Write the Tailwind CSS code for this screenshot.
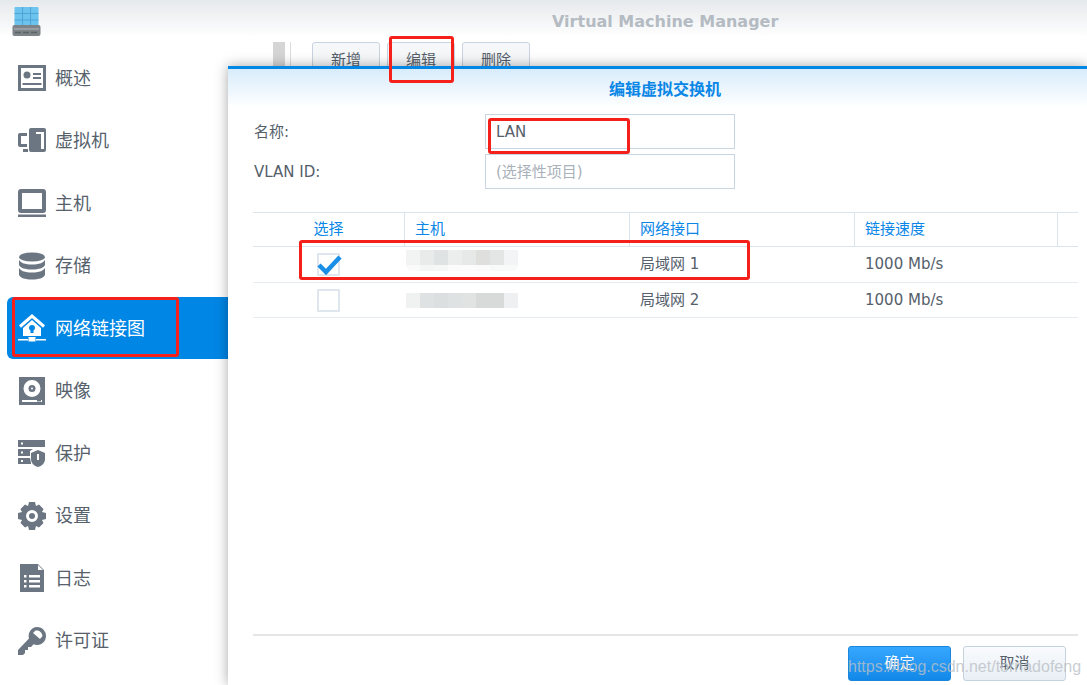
<!DOCTYPE html>
<html lang="zh">
<head>
  <meta charset="UTF-8" />
  <title>Virtual Machine Manager</title>
  <script src="https://cdn.jsdelivr.net/npm/@tailwindcss/browser@4"></script>
</head>
<body class="[font-family:'DejaVu_Sans','Noto_Sans_CJK_SC',sans-serif] text-[#55606b] bg-white">
<div class="relative w-[1087px] h-[685px] overflow-hidden bg-white">

  <!-- Header -->
  <header class="h-[47px] relative bg-gradient-to-b from-[#e6e9ec] to-white to-80%">
    <svg class="absolute left-[12px] top-[6px]" width="29" height="30" viewBox="0 0 29 30">
      <rect x="2.500" y="1" width="24" height="20" rx="1" fill="#6cc3ee"/>
      <path d="M2.500 7.500h24M2.500 14h24M10.500 1v20M18.500 1v20" stroke="#4fa3d6" stroke-width="1"/>
      <rect x="0.500" y="19" width="28" height="11" rx="2" fill="#7d8387"/>
      <path d="M2 23h25" stroke="#b4b8bb" stroke-width="1"/>
      <path d="M3 26.500h6M11 26.500h6M19 26.500h6" stroke="#5d6367" stroke-width="1.500"/>
    </svg>
    <h1 class="absolute left-[552px] top-[12px] text-[16px] leading-[20px] font-bold text-[#b4bbc2]">Virtual Machine Manager</h1>
  </header>

  <div class="flex">
    <!-- Sidebar -->
    <nav class="w-[228px] shrink-0 pl-[7px] text-[18px] text-[#56616c]">
      <a class="h-[62.5px] flex items-center pl-[11px] gap-[9px]">
        <svg width="28" height="28" viewBox="0 0 28 28" fill="#6b7682"><path fill-rule="evenodd" d="M0 1h28v26H0zM3 4v20h22V4z"/><circle cx="9" cy="11" r="3.500"/><path d="M4.500 19h19v2h-19zM15 9h8v2h-8zM15 13h8v2h-8z"/></svg>
        <span>概述</span>
      </a>
      <a class="h-[62.5px] flex items-center pl-[11px] gap-[9px]">
        <svg width="28" height="28" viewBox="0 0 28 28" fill="#6b7682"><path fill-rule="evenodd" d="M11 3a2 2 0 0 1 2-2h13a2 2 0 0 1 2 2v20a2 2 0 0 1-2 2H13a2 2 0 0 1-2-2zM18 5v2h5v15h3V5z"/><path fill-rule="evenodd" d="M0 8a2 2 0 0 1 2-2h7v3H3v8h6v3H2a2 2 0 0 1-2-2z"/><path d="M5 22h5v3H5z"/></svg>
        <span>虚拟机</span>
      </a>
      <a class="h-[62.5px] flex items-center pl-[11px] gap-[9px]">
        <svg width="28" height="28" viewBox="0 0 28 28" fill="#6b7682"><path fill-rule="evenodd" d="M3 0h22a3 3 0 0 1 3 3v18a3 3 0 0 1-3 3H3a3 3 0 0 1-3-3V3a3 3 0 0 1 3-3zM4 4v16h20V4z"/><path d="M0 25.500h28V28H0z"/></svg>
        <span>主机</span>
      </a>
      <a class="h-[62.5px] flex items-center pl-[11px] gap-[9px]">
        <svg width="28" height="28" viewBox="0 0 28 28" fill="#6b7682"><ellipse cx="14" cy="5" rx="13" ry="4.500"/><path d="M1 8c2 3 6 4.500 13 4.500S25 11 27 8v5c-1.500 3-6 4.500-13 4.500S2.500 16 1 13z"/><path d="M1 16c2 3 6 4.500 13 4.500S25 19 27 16v7c-1.500 3-6 4.500-13 4.500S2.500 26 1 23z"/></svg>
        <span>存储</span>
      </a>
      <a class="h-[62px] mb-[0.5px] flex items-center pl-[11px] gap-[9px] bg-[#0086e5] rounded-l-md text-white">
        <svg width="28" height="28" viewBox="0 0 28 28" fill="#fff"><path d="M2 12.500 14 2l12 10.500" fill="none" stroke="#fff" stroke-width="3"/><path fill-rule="evenodd" d="M14 6 23 14v8H5v-8zM14 11a3 3 0 0 0-3 3 3 3 0 0 0 1.500 2.500V19h3v-2.500A3 3 0 0 0 17 14a3 3 0 0 0-3-3z"/><path d="M0 25h10v1.500H0zM18 25h10v1.500H18zM10.500 23h7v4.500h-7z"/></svg>
        <span>网络链接图</span>
      </a>
      <a class="h-[62.5px] flex items-center pl-[11px] gap-[9px]">
        <svg width="28" height="28" viewBox="0 0 28 28" fill="#6b7682"><path fill-rule="evenodd" d="M1 0h26v28H1zM14 3a8.500 8.500 0 1 0 0 17 8.500 8.500 0 0 0 0-17zM4 23v2h20v-2z"/><path fill-rule="evenodd" d="M14 8a3.500 3.500 0 1 0 0 7 3.500 3.500 0 0 0 0-7zm0 2.500a1 1 0 1 1 0 2 1 1 0 0 1 0-2z"/><path d="M19 23h4v1.500h-4z" fill="#6b7682"/></svg>
        <span>映像</span>
      </a>
      <a class="h-[62.5px] flex items-center pl-[11px] gap-[9px]">
        <svg width="28" height="28" viewBox="0 0 28 28" fill="#6b7682"><path fill-rule="evenodd" d="M0 1h27v7H0zM3 3.500v2h2v-2z"/><path fill-rule="evenodd" d="M0 10h15l-3 2v5H0zM3 12.500v2h2v-2z"/><path fill-rule="evenodd" d="M0 19h12l1 5v1H0zM3 21v2h2v-2z"/><path fill-rule="evenodd" d="M20 11l7 3v6c0 4-3 7-7 8-4-1-7-4-7-8v-6zM19 15v6h2v-6z"/></svg>
        <span>保护</span>
      </a>
      <a class="h-[62.5px] flex items-center pl-[11px] gap-[9px]">
        <svg width="28" height="28" viewBox="0 0 28 28" fill="#6b7682"><path fill-rule="evenodd" d="M11 0h6l1 4 3-1.500 4.500 4.500L24 10l4 1v6l-4 1 1.500 3-4.500 4.500L18 24l-1 4h-6l-1-4-3 1.500L2.500 21 4 18l-4-1v-6l4-1-1.500-3L7 2.500 10 4zM14 8a6 6 0 1 0 0 12 6 6 0 0 0 0-12z"/><circle cx="14" cy="14" r="3" /></svg>
        <span>设置</span>
      </a>
      <a class="h-[62.5px] flex items-center pl-[11px] gap-[9px]">
        <svg width="28" height="28" viewBox="0 0 28 28" fill="#6b7682"><path fill-rule="evenodd" d="M2 0h18l6 6v22H2zM20 1v5h5zM6 11v2.500h2.500V11zM11 11v2.500h11V11zM6 16v2.500h2.500V16zM11 16v2.500h11V16zM6 21v2.500h2.500V21zM11 21v2.500h11V21z"/></svg>
        <span>日志</span>
      </a>
      <a class="h-[62.5px] flex items-center pl-[11px] gap-[9px]">
        <svg width="28" height="28" viewBox="0 0 28 28" fill="#6b7682"><path fill-rule="evenodd" d="M19 0a9 9 0 1 1-3.500 17.300L13 20h-3v3H7v3l-2 2H0v-5L11 11.500A9 9 0 0 1 19 0zm-1.500 3.500L15 6l7 6 2.500-3C24 5 21 3 17.500 3.500z"/></svg>
        <span>许可证</span>
      </a>
    </nav>

    <!-- Toolbar behind the dialog -->
    <div class="relative flex-1 flex items-start pl-[45px] text-[15px]">
      <div class="w-[12px] h-[24px] mt-[-5px] bg-[#d5d5d5]"></div>
      <div class="w-px h-[24px] mt-[-5px] ml-[5px] bg-[#dcdcdc]"></div>
      <div class="flex mt-[-5px] ml-[21px] gap-[7px]">
        <button class="w-[68px] h-[32px] border border-[#c8d3df] rounded-[3px] bg-[#f5f7f9] pt-[4px]">新增</button>
        <button class="w-[68px] h-[32px] border border-[#c8d3df] rounded-[3px] bg-[#f5f7f9] pt-[4px]">编辑</button>
        <button class="w-[68px] h-[32px] border border-[#c8d3df] rounded-[3px] bg-[#f5f7f9] pt-[4px]">删除</button>
      </div>
    </div>
  </div>

  <!-- Dialog -->
  <section class="absolute left-[228px] top-[66px] right-0 bottom-0 flex flex-col bg-white border-t-[3px] border-[#0086e5] shadow-[0_0_12px_rgba(0,0,0,0.35)] text-[15px]">
    <h2 class="h-[39px] flex items-center justify-center pl-[15px] pt-[2px] text-[16px] font-bold text-[#0a86e6] bg-gradient-to-b from-[#d8ecfb] to-white">编辑虚拟交换机</h2>

    <div class="pl-[26px] pt-[6px] flex flex-col gap-[5px]">
      <div class="flex items-start h-[35px]">
        <label class="w-[231px] leading-[35px] pt-[1px]">名称:</label>
        <div class="w-[250px] h-[35px] border border-[#c8d6e3] px-[10px] leading-[35px]">LAN</div>
      </div>
      <div class="flex items-start h-[35px]">
        <label class="w-[231px] leading-[35px] pt-[1px]">VLAN ID:</label>
        <div class="w-[250px] h-[35px] border border-[#c8d6e3] px-[10px] leading-[35px] text-[#a9b1b9]">(选择性项目)</div>
      </div>
    </div>

    <div class="mt-[23px] ml-[25px] mr-[9px]">
      <div class="flex h-[35px] items-center border-t border-b border-[#dbe5ee] text-[#0a86e6]">
        <div class="w-[151px] h-full flex items-center justify-center">选择</div>
        <div class="w-[225px] h-full flex items-center pl-[10px] border-l border-[#dbe5ee]">主机</div>
        <div class="w-[225px] h-full flex items-center pl-[10px] border-l border-[#dbe5ee]">网络接口</div>
        <div class="w-[203px] h-full flex items-center pl-[10px] border-l border-[#dbe5ee]">链接速度</div>
        <div class="flex-1 h-full border-l border-[#dbe5ee]"></div>
      </div>
      <div class="flex h-[36px] items-center border-b border-[#e6ecf2]">
        <div class="w-[151px] flex justify-center">
          <div class="relative w-[23px] h-[23px] border-2 border-[#dfe6ed] rounded-[1px]">
            <svg class="absolute left-[-2px] top-[0px]" width="26" height="20" viewBox="0 0 26 20"><path d="M2 10 9 17 23 2" fill="none" stroke="#1a8fe8" stroke-width="4.500"/></svg>
          </div>
        </div>
        <div class="w-[225px] pl-[2px]">
          <div class="flex w-[112px] h-[15px] -mt-[8px]">
            <i class="w-[14px] bg-[#f2f3f3]"></i><i class="w-[14px] bg-[#e9ebeb]"></i><i class="w-[14px] bg-[#e0e3e3]"></i><i class="w-[14px] bg-[#eceeee]"></i><i class="w-[14px] bg-[#e7e9e9]"></i><i class="w-[14px] bg-[#dfe0de]"></i><i class="w-[14px] bg-[#e4e6e6]"></i><i class="w-[14px] bg-[#f3f4f5]"></i>
          </div>
          <div class="flex w-[112px] h-[6px] rounded-b-md overflow-hidden">
            <i class="w-[14px] bg-[#fafafa]"></i><i class="w-[14px] bg-[#f4f5f5]"></i><i class="w-[14px] bg-[#f5f6f6]"></i><i class="w-[14px] bg-[#fbfbfb]"></i><i class="w-[14px] bg-[#fcfcfc]"></i><i class="w-[14px] bg-[#fbfbfb]"></i><i class="w-[14px] bg-[#f8f9f9]"></i><i class="w-[14px] bg-[#f8f9f9]"></i>
          </div>
        </div>
        <div class="w-[225px] pl-[11px]">局域网 1</div>
        <div class="pl-[11px]">1000 Mb/s</div>
      </div>
      <div class="flex h-[35px] items-center border-b border-[#e6ecf2]">
        <div class="w-[151px] flex justify-center">
          <div class="w-[23px] h-[23px] border-2 border-[#dfe6ed] rounded-[1px]"></div>
        </div>
        <div class="w-[225px] pl-[2px]">
          <div class="flex w-[112px] h-[15px]">
            <i class="w-[14px] bg-[#f0f1f1]"></i><i class="w-[14px] bg-[#dfe2e2]"></i><i class="w-[14px] bg-[#dbdfdf]"></i><i class="w-[14px] bg-[#dfe2e2]"></i><i class="w-[14px] bg-[#e1e3e3]"></i><i class="w-[14px] bg-[#d8dada]"></i><i class="w-[14px] bg-[#d8dada]"></i><i class="w-[14px] bg-[#eff0f1]"></i>
          </div>
        </div>
        <div class="w-[225px] pl-[11px]">局域网 2</div>
        <div class="pl-[11px]">1000 Mb/s</div>
      </div>
    </div>

    <footer class="mt-auto ml-[25px] mr-[9px] h-[51px] border-t-2 border-[#e4e6e8] flex justify-end items-start pt-[10px] pr-[12px] gap-[12px]">
      <button class="w-[103px] h-[35px] rounded-[3px] border border-[#1a86dd] bg-gradient-to-b from-[#36a7ff] to-[#1088e8] text-white">确定</button>
      <button class="w-[103px] h-[35px] rounded-[3px] border border-[#c5d2df] bg-gradient-to-b from-[#f9fbfd] to-[#e9eff5] text-[#55606b]">取消</button>
    </footer>
  </section>

  <!-- Annotation boxes drawn over the screenshot -->
  <div class="absolute left-[389px] top-[36px] w-[65px] h-[47px] border-[3px] border-[#f5201a] rounded-[3px]"></div>
  <div class="absolute left-[488px] top-[118px] w-[142px] h-[36px] border-[3px] border-[#f5201a] rounded-[3px]"></div>
  <div class="absolute left-[299px] top-[240px] w-[451px] h-[40px] border-[3px] border-[#f5201a] rounded-[3px]"></div>
  <div class="absolute left-[12px] top-[297px] w-[167px] h-[60px] border-[3px] border-[#f5201a] rounded-[3px]"></div>

  <!-- Watermark -->
  <span class="absolute left-[848px] top-[657px] [font-family:'Liberation_Sans',sans-serif] text-[16px] leading-[20px] text-[#b9c0c6]/80 whitespace-nowrap">https://blog.csdn.net/tornadofeng</span>
</div>
</body>
</html>
